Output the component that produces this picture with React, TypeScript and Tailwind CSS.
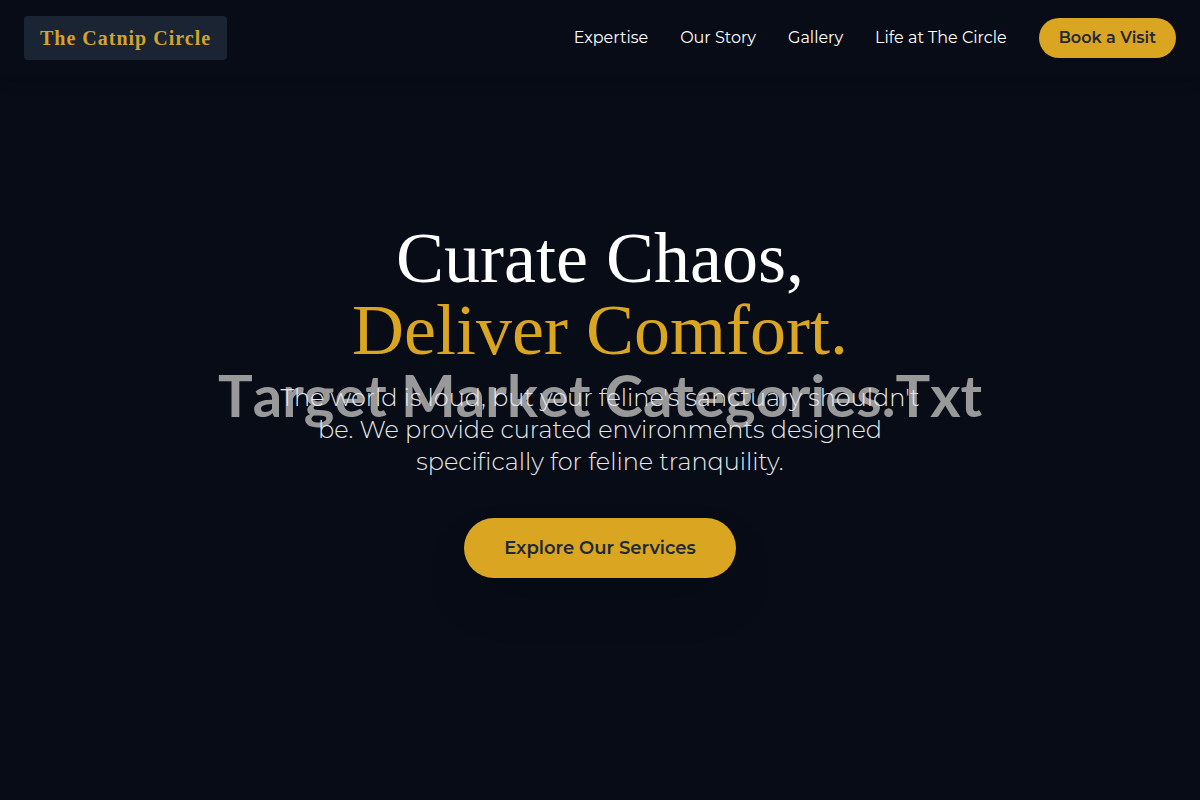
const navLinks = [
  { name: "Expertise", href: "#expertise" },
  { name: "Our Story", href: "#story" },
  { name: "Gallery", href: "#gallery" },
  { name: "Life at The Circle", href: "#life" },
];

function Header() {
  return (
    <header className="absolute inset-x-0 top-0 z-20 flex items-center justify-between bg-[#070c17] px-6 py-4 shadow-lg">
      <a
        href="#"
        className="rounded-sm bg-[#1b2433] px-4 py-2 font-['Liberation_Serif',serif] text-xl font-bold tracking-wider text-[#d4a32a]"
      >
        The Catnip Circle
      </a>
      <nav className="flex items-center gap-8">
        {navLinks.map((link) => (
          <a key={link.name} href={link.href} className="text-white hover:text-[#daa520]">
            {link.name}
          </a>
        ))}
        <button className="rounded-full bg-[#daa520] px-5 py-2 font-semibold text-[#1f2937]">
          Book a Visit
        </button>
      </nav>
    </header>
  );
}

export default function App() {
  return (
    <div className="min-h-screen bg-[#070c17] font-[Montserrat,Inter,sans-serif] text-white">
      <Header />
      <main className="relative flex min-h-screen items-center justify-center">
        {/* backdrop caption sits behind the hero copy */}
        <div className="absolute inset-0 flex items-center justify-center pb-3">
          <span className="whitespace-nowrap font-[Lato,sans-serif] text-[58px] font-bold text-[#999999] [font-kerning:none]">
            Target Market Categories.Txt
          </span>
        </div>

        <div className="relative flex flex-col items-center text-center">
          <h1 className="mb-4 font-['Liberation_Serif',serif] text-7xl leading-none">
            Curate Chaos,
            <br />
            <span className="text-[#daa520]">Deliver Comfort.</span>
          </h1>
          <p className="mb-10 max-w-2xl text-2xl font-light text-gray-200">
            The world is loud, but your feline's sanctuary shouldn't be. We provide curated
            environments designed specifically for feline tranquility.
          </p>
          <button className="rounded-full bg-[#daa520] px-10 py-4 text-lg font-semibold text-[#1f2937] shadow-2xl">
            Explore Our Services
          </button>
        </div>
      </main>
    </div>
  );
}
